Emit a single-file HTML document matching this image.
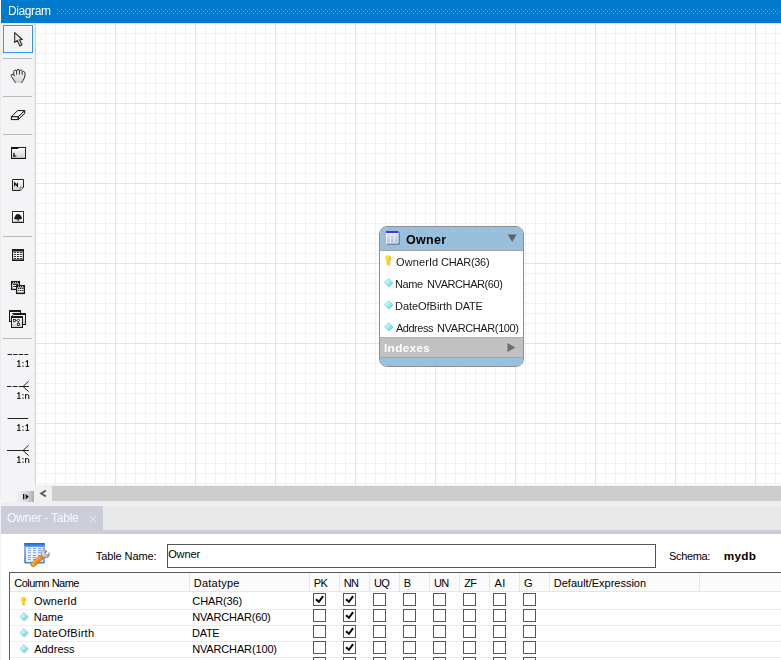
<!DOCTYPE html>
<html><head><meta charset="utf-8"><title>Diagram</title>
<style>
html,body{margin:0;padding:0;}
body{width:781px;height:660px;overflow:hidden;background:#fff;font-family:"Liberation Sans",sans-serif;font-size:11px;color:#000;position:relative;}
.a{position:absolute;}
.tx{position:absolute;white-space:pre;line-height:normal;}
#hdr{left:1px;top:0;width:780px;height:23px;background:#007acc;}
#tb{left:0;top:23px;width:35px;height:479px;background:#f4f4f6;border-radius:0 0 0 4px;}
#tbl{left:0;top:23px;width:1px;height:476px;background:#ececee;}
#tbsh{left:34px;top:23px;width:2px;height:462px;background:linear-gradient(90deg,#f1f1f2 0,#f1f1f2 50%,#d2d2d3 50%,#d2d2d3 100%);}
#cv{left:36px;top:23px;width:745px;height:462px;background-color:#fff;
background-image:
linear-gradient(90deg,#e3e3e3 1px,transparent 1px),
linear-gradient(0deg,transparent 79px,#e3e3e3 79px),
linear-gradient(90deg,#f1f1f1 1px,transparent 1px),
linear-gradient(180deg,#f1f1f1 1px,transparent 1px);
background-size:80px 80px,80px 80px,10px 10px,10px 10px;
background-position:79px 0,0 0,9px 0,0 10px;}
.sep{left:3px;width:29px;height:1px;background:#b9b9b9;}
#sel{left:3px;top:25px;width:28px;height:26px;border:1px solid #3393f3;box-shadow:inset 0 0 0 1px #fbfaf8;}
#sb{left:35px;top:485px;width:746px;height:17px;background:#f0f0f0;}
#thumb{left:52px;top:486px;width:729px;height:15px;background:#cdcdcd;}
#more{left:2px;top:491px;width:32px;height:11px;background:linear-gradient(90deg,rgba(168,168,170,0) 0,rgba(168,168,170,0) 40%,rgba(168,168,170,0.14) 60%,rgba(168,168,170,0.36) 78%,rgba(166,166,168,0.7) 92%,rgba(164,164,166,0.95) 100%);}
#gap{left:0;top:502px;width:781px;height:4px;background:#efeff1;}
#tabs{left:1px;top:506px;width:780px;height:24px;background:#e8e8e8;}
#tab{left:1px;top:506px;width:102px;height:28px;background:#cbced8;}
#band{left:1px;top:530px;width:780px;height:4px;background:#cbced8;}
#lm{left:0;top:506px;width:1px;height:154px;background:#f0f0f2;}
/* diagram table */
#dt{left:379px;top:226px;width:143px;height:139px;border:1px solid #8e8e8e;border-radius:8px;overflow:hidden;background:#fff;}
#dth{left:0;top:0;width:143px;height:23px;background:#98bfdb;border-bottom:1px solid #a3a3a3;}
#dti{left:0;top:110px;width:143px;height:21px;background:#c1c1c1;border-top:1px solid #b0b0b0;border-bottom:1px solid #a3a3a3;box-sizing:border-box;}
#dtf{left:0;top:131px;width:143px;height:8px;background:#98bfdb;}
/* bottom panel */
#inp{left:167px;top:544px;width:487px;height:22px;border:1px solid #555;background:#fff;}
#grid{left:9px;top:572px;width:772px;height:88px;border-left:1px solid #5a5a5a;border-top:1px solid #5a5a5a;background:#fff;}
#gh{left:10px;top:573px;width:771px;height:18px;background:#fbfbfb;border-bottom:1px solid #dfe7f3;}
.vs{top:573px;width:1px;height:18px;background:#dfe7f3;}
.hs{left:10px;width:771px;height:1px;background:#eeeeee;}
.cb{width:11px;height:11px;border:1px solid #585858;background:#fff;}

</style></head><body>
<div id="hdr" class="a"></div>
<div id="tb" class="a"></div><div id="tbl" class="a"></div>
<div id="tbsh" class="a"></div>
<div id="cv" class="a"></div><div id="crm" class="a" style="left:1px;top:23px;width:780px;height:1px;background:rgba(236,218,200,0.35)"></div>
<div class="a sep" style="top:58px"></div>
<div class="a sep" style="top:96px"></div>
<div class="a sep" style="top:134px"></div>
<div class="a sep" style="top:236px"></div>
<div class="a sep" style="top:338px"></div>
<div id="sel" class="a"></div>
<div id="sb" class="a"></div><div id="thumb" class="a"></div><div id="more" class="a"></div>
<div id="gap" class="a"></div><div id="tabs" class="a"></div><div id="band" class="a"></div><div id="tab" class="a"></div><div id="lm" class="a"></div>
<div id="dt" class="a"><div id="dth" class="a"></div><div id="dti" class="a"></div><div id="dtf" class="a"></div></div>
<div id="inp" class="a"></div>
<div id="grid" class="a"></div><div id="gh" class="a"></div>
<div class="a vs" style="left:189px"></div>
<div class="a vs" style="left:309px"></div>
<div class="a vs" style="left:339px"></div>
<div class="a vs" style="left:369px"></div>
<div class="a vs" style="left:399px"></div>
<div class="a vs" style="left:429px"></div>
<div class="a vs" style="left:459px"></div>
<div class="a vs" style="left:489px"></div>
<div class="a vs" style="left:519px"></div>
<div class="a vs" style="left:549px"></div>
<div class="a vs" style="left:699px"></div>
<div class="a hs" style="top:609px"></div>
<div class="a hs" style="top:625px"></div>
<div class="a hs" style="top:641px"></div>
<div class="a hs" style="top:657px"></div>
<div class="a cb" style="left:313px;top:593px"></div>
<div class="a cb" style="left:343px;top:593px"></div>
<div class="a cb" style="left:373px;top:593px"></div>
<div class="a cb" style="left:403px;top:593px"></div>
<div class="a cb" style="left:433px;top:593px"></div>
<div class="a cb" style="left:463px;top:593px"></div>
<div class="a cb" style="left:493px;top:593px"></div>
<div class="a cb" style="left:523px;top:593px"></div>
<div class="a cb" style="left:313px;top:609px"></div>
<div class="a cb" style="left:343px;top:609px"></div>
<div class="a cb" style="left:373px;top:609px"></div>
<div class="a cb" style="left:403px;top:609px"></div>
<div class="a cb" style="left:433px;top:609px"></div>
<div class="a cb" style="left:463px;top:609px"></div>
<div class="a cb" style="left:493px;top:609px"></div>
<div class="a cb" style="left:523px;top:609px"></div>
<div class="a cb" style="left:313px;top:625px"></div>
<div class="a cb" style="left:343px;top:625px"></div>
<div class="a cb" style="left:373px;top:625px"></div>
<div class="a cb" style="left:403px;top:625px"></div>
<div class="a cb" style="left:433px;top:625px"></div>
<div class="a cb" style="left:463px;top:625px"></div>
<div class="a cb" style="left:493px;top:625px"></div>
<div class="a cb" style="left:523px;top:625px"></div>
<div class="a cb" style="left:313px;top:641px"></div>
<div class="a cb" style="left:343px;top:641px"></div>
<div class="a cb" style="left:373px;top:641px"></div>
<div class="a cb" style="left:403px;top:641px"></div>
<div class="a cb" style="left:433px;top:641px"></div>
<div class="a cb" style="left:463px;top:641px"></div>
<div class="a cb" style="left:493px;top:641px"></div>
<div class="a cb" style="left:523px;top:641px"></div>
<div class="a cb" style="left:313px;top:657px"></div>
<div class="a cb" style="left:343px;top:657px"></div>
<div class="a cb" style="left:373px;top:657px"></div>
<div class="a cb" style="left:403px;top:657px"></div>
<div class="a cb" style="left:433px;top:657px"></div>
<div class="a cb" style="left:463px;top:657px"></div>
<div class="a cb" style="left:493px;top:657px"></div>
<div class="a cb" style="left:523px;top:657px"></div>
<svg class="a" style="left:0;top:0" width="781" height="660" viewBox="0 0 781 660">
<defs>
<pattern id="dots" x="57" y="9" width="4" height="4" patternUnits="userSpaceOnUse"><rect x="0" y="0" width="1" height="1" fill="#62a8e2"/><rect x="2" y="2" width="1" height="1" fill="#62a8e2"/></pattern>
<linearGradient id="gw" x1="0" y1="0" x2="0" y2="1"><stop offset="0" stop-color="#ffffff"/><stop offset="1" stop-color="#cfcfcf"/></linearGradient>
<linearGradient id="gw2" x1="0" y1="0" x2="1" y2="1"><stop offset="0" stop-color="#ffffff"/><stop offset="1" stop-color="#c8c8c8"/></linearGradient>
<linearGradient id="gdia" x1="0" y1="0" x2="1" y2="1"><stop offset="0.1" stop-color="#e6ffff"/><stop offset="0.55" stop-color="#8df1f6"/><stop offset="0.95" stop-color="#4ddfea"/></linearGradient>
<linearGradient id="gkey" x1="0" y1="0" x2="1" y2="0"><stop offset="0" stop-color="#fbe35a"/><stop offset="0.5" stop-color="#f8d21c"/><stop offset="1" stop-color="#e9bd10"/></linearGradient>
<linearGradient id="gtbl" x1="0" y1="0" x2="0" y2="1"><stop offset="0" stop-color="#e3e9f8"/><stop offset="1" stop-color="#a9bfe6"/></linearGradient>
<linearGradient id="gband" x1="0" y1="0" x2="0" y2="1"><stop offset="0" stop-color="#1c62d8"/><stop offset="1" stop-color="#4c95f2"/></linearGradient>
<linearGradient id="gbody" x1="0" y1="0" x2="0" y2="1"><stop offset="0" stop-color="#7fb0f0"/><stop offset="1" stop-color="#3f7fe0"/></linearGradient>
<linearGradient id="gin" x1="0" y1="0" x2="1" y2="1"><stop offset="0" stop-color="#ffffff"/><stop offset="1" stop-color="#d4e4fb"/></linearGradient>
<linearGradient id="gor" x1="0" y1="0" x2="1" y2="1"><stop offset="0" stop-color="#fbb04a"/><stop offset="0.5" stop-color="#f28c1e"/><stop offset="1" stop-color="#d9700f"/></linearGradient>
<linearGradient id="gsil" x1="0" y1="0" x2="1" y2="1"><stop offset="0" stop-color="#f2f2f2"/><stop offset="0.5" stop-color="#cfcfcf"/><stop offset="1" stop-color="#8e8e8e"/></linearGradient>
<g id="dia"><path d="M0.6,0.9 L5,5.3 L0.6,5.3 Z" fill="none"/><path d="M0,-4.1 L4.1,0 L0,4.1 L-4.1,0 Z" transform="translate(0.7,0.8)" fill="#8f989d" opacity="0.5"/><path d="M0,-4.1 L4.1,0 L0,4.1 L-4.1,0 Z" fill="url(#gdia)" stroke="#7cc3cb" stroke-width="0.6"/></g>
<g id="key"><path d="M0.8,0.8 m-3,0 a3,3 0 1 1 6,0 q0,1.6 -1.3,2.3 l0,3.6 l-0.9,0.9 l-1.6,0 l-0.9,-0.9 l0,-3.6 q-1.3,-0.7 -1.3,-2.3z" fill="#a9b4c8" opacity="0.45"/><path d="M-3,0 a3,3 0 1 1 6,0 q0,1.6 -1.3,2.3 l0,3.6 l-0.9,0.9 l-1.6,0 l-0.9,-0.9 l0,-3.6 q-1.3,-0.7 -1.3,-2.3z" fill="url(#gkey)"/><circle cx="0" cy="-1.2" r="0.8" fill="#fdf0a0"/></g>
<g id="one"><path d="M0.6,1.8 L2.2,0.7 L2.2,6.2" fill="none" stroke="#0a0a0a" stroke-width="1.05"/><path d="M0.4,6.5 L3.9,6.5" fill="none" stroke="#0a0a0a" stroke-width="0.9"/></g>
<g id="col"><rect x="0" y="2.1" width="1.15" height="1.2" fill="#151515"/><rect x="0" y="5.6" width="1.15" height="1.2" fill="#151515"/></g>
<g id="en"><path d="M0.7,7 L0.7,2 M0.7,3.6 Q1.5,2.5 2.6,2.5 Q3.9,2.6 3.9,4.1 L3.9,7" fill="none" stroke="#0a0a0a" stroke-width="1"/></g>
<g id="chk"><path d="M2.9,6.3 L5.9,8.8 L10.1,3.1" fill="none" stroke="#0c0c0c" stroke-width="2.1"/></g>
</defs>
<!-- header dots -->
<rect x="57" y="9" width="723" height="5" fill="url(#dots)"/>

<!-- cursor -->
<path d="M14.7,32.7 L14.7,42.4 L17.2,40.4 L19.9,45.9 L22,44.8 L19.5,39.7 L22.3,39.5 Z" fill="url(#gw2)" stroke="#2a2a2a" stroke-width="1.1" stroke-linejoin="round"/>

<!-- hand -->
<path d="M15.6,82.9 L11.4,76.4 Q10.6,74.9 12,74.3 Q13.1,74 13.7,75 L13.8,71.6 Q14,70.1 15.2,70.1 Q16.5,70.1 16.6,71.4 Q16.7,69.3 18,69.3 Q19.4,69.3 19.4,70.8 Q19.6,69.9 20.8,69.9 Q22.2,70 22.2,71.6 Q22.6,71.2 23.6,71.3 Q25,71.6 25,73.6 L25,75 Q24.8,78 23,80.6 L21.4,82.9 Z" fill="url(#gw)"/>
<path d="M15.4,82.5 L11.4,76.4 Q10.6,74.9 12,74.3 Q13.3,73.9 14.6,75.8 M13.8,75 L13.8,71.6 Q14,70.1 15.2,70.1 Q16.5,70.1 16.6,71.4 L16.6,74.3 M16.6,71.2 Q16.7,69.3 18,69.3 Q19.4,69.3 19.4,70.8 L19.4,74.2 M19.4,71 Q19.6,69.9 20.8,69.9 Q22.2,70 22.2,71.6 L22.2,74.4 M22.2,72 Q22.6,71.2 23.6,71.3 Q25,71.6 25,73.6 L25,75 Q24.8,78 23,80.6 L21.6,82.5" fill="none" stroke="#2e2e2e" stroke-width="1" stroke-linecap="round"/>

<!-- eraser -->
<path d="M11.4,116.8 L17.6,110.6 L24.8,110.6 L18.1,116.8 Z" fill="#f6f6f6" stroke="#111" stroke-width="1" stroke-linejoin="round"/>
<path d="M18.1,116.8 L24.8,110.6 L24.8,113.4 L18.1,119.6 Z" fill="#e8e8e8" stroke="#111" stroke-width="1" stroke-linejoin="round"/>
<rect x="11.4" y="116.8" width="6.7" height="2.8" fill="#fff" stroke="#111" stroke-width="1"/>

<!-- layer -->
<rect x="11.5" y="147.5" width="14" height="11" fill="url(#gw)" stroke="#1e1e1e" stroke-width="1"/>
<path d="M11,147 L19,147 L18,149 L11,149 Z" fill="#111"/>
<path d="M12.5,150 L18.5,150 L19.5,148.5 L24.5,148.5" fill="none" stroke="#fff" stroke-width="0.8" opacity="0.9"/>
<rect x="13.3" y="152.9" width="1.3" height="3.7" fill="#151515"/><rect x="13.3" y="155.5" width="3" height="1.1" fill="#151515"/><path d="M12,158.4 L25,158.4" stroke="#111" stroke-width="0.9"/>

<!-- note -->
<path d="M12.5,179.5 L23.5,179.5 L23.5,187.3 L20.3,190.5 L12.5,190.5 Z" fill="url(#gw)" stroke="#222" stroke-width="1"/>
<path d="M20.3,190.3 L20.3,187.3 L23.4,187.3" fill="#fff" stroke="#555" stroke-width="0.8"/>
<path d="M14.6,186.2 L14.6,182.8 L17.4,186.2 L17.4,182.8" fill="none" stroke="#151515" stroke-width="1.15" stroke-linejoin="miter"/>

<!-- image -->
<rect x="12.5" y="211.5" width="11" height="11" fill="#fff" stroke="#2e2e2e" stroke-width="1"/><path d="M12,222.5 L24,222.5" stroke="#222" stroke-width="0.8"/>
<path d="M14.3,218.9 Q13.9,217.3 15.1,216.2 Q15.7,214.1 17.5,214 Q20.2,213.9 20.9,215.8 Q22.2,217.1 21.9,218.8 Q20.4,219.8 18.6,219.4 L18.6,221.6 L17.6,221.6 L17.6,219.4 Q15.7,220 14.3,218.9 Z" fill="#1a1a1a"/>
<path d="M13.5,221.3 L22.5,221.3" stroke="#888" stroke-width="0.8"/>

<!-- table -->
<rect x="12.6" y="249.6" width="10.8" height="10.6" fill="#fff" stroke="#1a1a1a" stroke-width="1.2"/>
<rect x="12" y="249" width="12" height="2.5" fill="#1a1a1a"/>
<path d="M12,260.3 L24,260.3" stroke="#1a1a1a" stroke-width="1.4"/>
<g fill="#383838"><rect x="14" y="252" width="2.2" height="1"/><rect x="17" y="252" width="2.2" height="1"/><rect x="20" y="252" width="2.2" height="1"/><rect x="14" y="254" width="2.2" height="1"/><rect x="17" y="254" width="2.2" height="1"/><rect x="20" y="254" width="2.2" height="1"/><rect x="14" y="256" width="2.2" height="1"/><rect x="17" y="256" width="2.2" height="1"/><rect x="20" y="256" width="2.2" height="1"/><rect x="14" y="258" width="2.2" height="1"/><rect x="17" y="258" width="2.2" height="1"/><rect x="20" y="258" width="2.2" height="1"/></g>

<!-- views (two tables) -->
<g><rect x="11.6" y="281.6" width="7.8" height="7.8" fill="#fff" stroke="#1a1a1a" stroke-width="1.3"/><rect x="11" y="281" width="9" height="2.4" fill="#1a1a1a"/>
<g fill="#333"><rect x="13" y="284" width="5" height="1"/><rect x="13" y="286" width="5" height="1"/></g>
<g fill="#ddd"><rect x="13" y="281.9" width="1" height="0.9"/><rect x="15" y="281.9" width="1" height="0.9"/><rect x="17" y="281.9" width="1" height="0.9"/></g></g>
<g><rect x="16.6" y="285.6" width="7.8" height="7.8" fill="#fff" stroke="#1a1a1a" stroke-width="1.3"/><rect x="16" y="285" width="9" height="2.4" fill="#1a1a1a"/><path d="M16,293.4 L25,293.4" stroke="#1a1a1a" stroke-width="1.3"/>
<g fill="#2a2a2a"><rect x="18" y="288" width="1.5" height="1"/><rect x="20" y="288" width="1.5" height="1"/><rect x="22" y="288" width="1.5" height="1"/><rect x="18" y="290" width="1.5" height="1"/><rect x="20" y="290" width="1.5" height="1"/><rect x="22" y="290" width="1.5" height="1"/></g>
<g fill="#ddd"><rect x="18" y="285.9" width="1" height="0.9"/><rect x="20" y="285.9" width="1" height="0.9"/><rect x="22" y="285.9" width="1" height="0.9"/></g></g>

<!-- routines (three windows) -->
<g><rect x="9.5" y="310.5" width="11" height="11" fill="url(#gw)" stroke="#1a1a1a"/><rect x="9" y="310" width="12" height="2" fill="#1a1a1a"/></g>
<g><rect x="12.5" y="313.5" width="13" height="11" fill="url(#gw)" stroke="#1a1a1a"/><rect x="12" y="313" width="14" height="2" fill="#1a1a1a"/><rect x="11.8" y="313.8" width="1.4" height="1.4" fill="#eee"/></g>
<g><rect x="11.5" y="316.5" width="11" height="11" fill="url(#gw)" stroke="#1a1a1a"/><rect x="11" y="316" width="12" height="2" fill="#1a1a1a"/>
<rect x="13.4" y="319.4" width="2" height="2" fill="#fff" stroke="#222" stroke-width="0.8"/><circle cx="18.4" cy="320.4" r="1.2" fill="#fff" stroke="#222" stroke-width="0.8"/><rect x="17.4" y="323.4" width="2" height="2" fill="#fff" stroke="#222" stroke-width="0.8"/>
<path d="M15.6,320.4 L17,320.4 M18.4,321.8 L18.4,323.2" stroke="#222" stroke-width="0.8"/></g>

<!-- relationships -->
<g stroke="#222" stroke-width="1" fill="none">
<path d="M7.6,354.5 L28.2,354.5" stroke-dasharray="4.4 1.2"/>
<path d="M7,386.5 L23,386.5" stroke-dasharray="4.6 1.2"/><path d="M28.6,381.3 L23,386.5 L28.6,391.5 M23,386.5 L29,386.5"/>
<path d="M7.6,418.5 L28.2,418.5"/>
<path d="M7,450.5 L29,450.5"/><path d="M28.6,445.3 L23,450.5 L28.6,455.5"/>
</g>

<use href="#one" x="16.8" y="360"/><use href="#col" x="22.4" y="360"/><use href="#one" x="25.2" y="360"/>
<use href="#one" x="16.8" y="392"/><use href="#col" x="22.4" y="392"/><use href="#en" x="24.9" y="392"/>
<use href="#one" x="16.8" y="424"/><use href="#col" x="22.4" y="424"/><use href="#one" x="25.2" y="424"/>
<use href="#one" x="16.8" y="456"/><use href="#col" x="22.4" y="456"/><use href="#en" x="24.9" y="456"/>
<!-- big table + wrench icon -->
<g>
<rect x="24.2" y="543" width="20.6" height="20.4" rx="0.8" fill="url(#gbody)"/>
<rect x="24.2" y="543" width="20.6" height="3.6" rx="0.6" fill="url(#gband)"/>
<rect x="25.9" y="547.2" width="17.4" height="14.8" fill="url(#gin)"/>
<g fill="#6f9dea"><rect x="27.8" y="548.2" width="3.1" height="0.9"/><rect x="32.9" y="548.2" width="3.1" height="0.9"/><rect x="38" y="548.2" width="3.6" height="0.9"/><rect x="27.8" y="550.2" width="3.1" height="0.9"/><rect x="32.9" y="550.2" width="3.1" height="0.9"/><rect x="38" y="550.2" width="3.6" height="0.9"/><rect x="27.8" y="552.3" width="3.1" height="0.9"/><rect x="32.9" y="552.3" width="3.1" height="0.9"/><rect x="38" y="552.3" width="3.6" height="0.9"/><rect x="27.8" y="555.1" width="3.1" height="0.9"/><rect x="32.9" y="555.1" width="3.1" height="0.9"/><rect x="38" y="555.1" width="3.6" height="0.9"/><rect x="27.8" y="557.1" width="3.1" height="0.9"/><rect x="32.9" y="557.1" width="3.1" height="0.9"/><rect x="38" y="557.1" width="3.6" height="0.9"/><rect x="27.8" y="559" width="3.1" height="0.9"/><rect x="32.9" y="559" width="3.1" height="0.9"/><rect x="38" y="559" width="3.6" height="0.9"/></g>
<circle cx="45.4" cy="554" r="4" fill="url(#gsil)" stroke="#7c7c7c" stroke-width="0.7"/>
<path d="M45.6,553.4 L50.6,548.4" stroke="#ffffff" stroke-width="3.3" fill="none"/>
<path d="M44.9,552.6 L46.6,551" stroke="#47588a" stroke-width="1.6" fill="none" opacity="0.85"/>
<path d="M44.3,552 Q44.6,554.3 46.8,554.6" stroke="#8d97ad" stroke-width="0.7" fill="none"/>
<path d="M33.1,564.4 L40.4,558.1" stroke="#c9650d" stroke-width="5.2" stroke-linecap="round" fill="none"/>
<path d="M33.1,564.4 L40.4,558.1" stroke="url(#gor)" stroke-width="4.2" stroke-linecap="round" fill="none"/>
<path d="M32.8,563.2 L39.6,557.5" stroke="#fcc472" stroke-width="1" stroke-linecap="round" fill="none" opacity="0.8"/>
<circle cx="33.3" cy="564.5" r="0.8" fill="#fbd9a0"/>
</g>
<!-- more button glyph -->
<rect x="23" y="494" width="1.3" height="5.4" fill="#111"/><path d="M25.6,494 L25.6,499.5 L28.8,496.75 Z" fill="#111"/>
<!-- scroll arrow -->
<path d="M46,490.6 L41.2,493.5 L46,496.4" fill="none" stroke="#5a5a5a" stroke-width="1.8"/>
<!-- tab close -->
<path d="M89.6,516 L96,522.2 M96,516 L89.6,522.2" stroke="#eceef3" stroke-width="1" fill="none"/>

<!-- diagram table: header icon -->
<rect x="387.2" y="232.2" width="12.6" height="12.6" rx="0.6" fill="#3f4c78" opacity="0.62"/>
<rect x="386" y="231" width="12.5" height="12.5" fill="#fff"/>
<rect x="386.8" y="233" width="10.9" height="9.7" fill="url(#gtbl)"/>
<rect x="386" y="231" width="12.5" height="2" fill="#3a3ae0"/>
<path d="M390.3,233 L390.3,242.7 M394.3,233 L394.3,242.7" stroke="#f0f4fd" stroke-width="1"/>
<!-- triangles -->
<path d="M507.8,234.4 L516.6,234.4 L512.2,242 Z" fill="#606060"/>
<path d="M507.4,343 L507.4,352 L515.4,347.5 Z" fill="#6e6e6e"/>
<!-- key + diamonds in diagram -->
<use href="#key" x="388.05" y="258.2"/>
<use href="#dia" x="388.6" y="282.5"/>
<use href="#dia" x="388.6" y="304.6"/>
<use href="#dia" x="388.6" y="326.6"/>
<!-- key + diamonds in grid -->
<use href="#key" x="23.2" y="599.4" transform="translate(23.2 599.4) scale(0.86) translate(-23.2 -599.4)"/>
<use href="#dia" x="23.8" y="616.5"/>
<use href="#dia" x="23.8" y="632.5"/>
<use href="#dia" x="23.8" y="648.5"/>
<!-- checkmarks -->
<use href="#chk" x="313" y="593"/>
<use href="#chk" x="343" y="593"/>
<use href="#chk" x="343" y="609"/>
<use href="#chk" x="343" y="625"/>
<use href="#chk" x="343" y="641"/>
</svg>

<div class="tx" style="will-change:transform;left:7.90px;top:4.14px;font-size:12.00px;font-weight:normal;color:#ffffff;letter-spacing:-0.399px">Diagram</div>
<div class="tx" style="will-change:transform;left:7.45px;top:511.14px;font-size:12.00px;font-weight:normal;color:rgba(255,255,255,0.88);letter-spacing:-0.224px">Owner - Table</div>
<div class="tx" style="will-change:transform;left:406.00px;top:232.69px;font-size:12.50px;font-weight:bold;color:#000000;letter-spacing:0.275px">Owner</div>
<div class="tx" style="will-change:transform;left:395.58px;top:256.05px;font-size:11.00px;font-weight:normal;color:#1a1a1a;letter-spacing:0.108px">OwnerId</div>
<div class="tx" style="will-change:transform;left:440.65px;top:256.05px;font-size:11.00px;font-weight:normal;color:#1a1a1a;letter-spacing:-0.310px">CHAR(36)</div>
<div class="tx" style="will-change:transform;left:395.10px;top:278.05px;font-size:11.00px;font-weight:normal;color:#1a1a1a;letter-spacing:-0.420px">Name</div>
<div class="tx" style="will-change:transform;left:426.70px;top:278.05px;font-size:11.00px;font-weight:normal;color:#1a1a1a;letter-spacing:-0.415px">NVARCHAR(60)</div>
<div class="tx" style="will-change:transform;left:395.10px;top:300.05px;font-size:11.00px;font-weight:normal;color:#1a1a1a;letter-spacing:-0.042px">DateOfBirth</div>
<div class="tx" style="will-change:transform;left:454.90px;top:300.05px;font-size:11.00px;font-weight:normal;color:#1a1a1a;letter-spacing:-0.267px">DATE</div>
<div class="tx" style="will-change:transform;left:395.91px;top:322.05px;font-size:11.00px;font-weight:normal;color:#1a1a1a;letter-spacing:-0.487px">Address</div>
<div class="tx" style="will-change:transform;left:436.70px;top:322.05px;font-size:11.00px;font-weight:normal;color:#1a1a1a;letter-spacing:-0.382px">NVARCHAR(100)</div>
<div class="tx" style="will-change:transform;left:384.35px;top:341.32px;font-size:11.80px;font-weight:bold;color:#ffffff;letter-spacing:0.328px">Indexes</div>
<div class="tx" style="left:95.86px;top:550.04px;font-size:11.00px;font-weight:normal;color:#000000;letter-spacing:-0.105px">Table Name:</div>
<div class="tx" style="left:168.17px;top:548.04px;font-size:11.00px;font-weight:normal;color:#000000;letter-spacing:-0.120px">Owner</div>
<div class="tx" style="left:669.09px;top:550.04px;font-size:11.00px;font-weight:normal;color:#000000;letter-spacing:-0.371px">Schema:</div>
<div class="tx" style="left:723.74px;top:549.32px;font-size:11.80px;font-weight:bold;color:#000000;letter-spacing:0.224px">mydb</div>
<div class="tx" style="left:14.26px;top:577.04px;font-size:11.00px;font-weight:normal;color:#000000;letter-spacing:-0.509px">Column Name</div>
<div class="tx" style="left:193.80px;top:577.04px;font-size:11.00px;font-weight:normal;color:#000000;letter-spacing:0.236px">Datatype</div>
<div class="tx" style="left:313.80px;top:577.04px;font-size:11.00px;font-weight:normal;color:#000000;letter-spacing:-0.750px">PK</div>
<div class="tx" style="left:343.80px;top:577.04px;font-size:11.00px;font-weight:normal;color:#000000;letter-spacing:-0.619px">NN</div>
<div class="tx" style="left:373.98px;top:577.04px;font-size:11.00px;font-weight:normal;color:#000000;letter-spacing:-0.750px">UQ</div>
<div class="tx" style="left:403.80px;top:577.04px;font-size:11.00px;font-weight:normal;color:#000000;letter-spacing:0.000px">B</div>
<div class="tx" style="left:433.98px;top:577.04px;font-size:11.00px;font-weight:normal;color:#000000;letter-spacing:-0.750px">UN</div>
<div class="tx" style="left:464.37px;top:577.04px;font-size:11.00px;font-weight:normal;color:#000000;letter-spacing:-0.750px">ZF</div>
<div class="tx" style="left:494.62px;top:577.04px;font-size:11.00px;font-weight:normal;color:#000000;letter-spacing:0.300px">AI</div>
<div class="tx" style="left:524.11px;top:577.04px;font-size:11.00px;font-weight:normal;color:#000000;letter-spacing:0.000px">G</div>
<div class="tx" style="left:553.80px;top:577.04px;font-size:11.00px;font-weight:normal;color:#000000;letter-spacing:-0.003px">Default/Expression</div>
<div class="tx" style="left:34.04px;top:595.04px;font-size:11.00px;font-weight:normal;color:#000000;letter-spacing:0.154px">OwnerId</div>
<div class="tx" style="left:33.80px;top:611.04px;font-size:11.00px;font-weight:normal;color:#000000;letter-spacing:-0.005px">Name</div>
<div class="tx" style="left:33.80px;top:627.04px;font-size:11.00px;font-weight:normal;color:#000000;letter-spacing:0.281px">DateOfBirth</div>
<div class="tx" style="left:34.19px;top:643.04px;font-size:11.00px;font-weight:normal;color:#000000;letter-spacing:-0.009px">Address</div>
<div class="tx" style="left:192.34px;top:595.04px;font-size:11.00px;font-weight:normal;color:#000000;letter-spacing:-0.141px">CHAR(36)</div>
<div class="tx" style="left:192.13px;top:611.04px;font-size:11.00px;font-weight:normal;color:#000000;letter-spacing:-0.169px">NVARCHAR(60)</div>
<div class="tx" style="left:192.11px;top:627.04px;font-size:11.00px;font-weight:normal;color:#000000;letter-spacing:-0.349px">DATE</div>
<div class="tx" style="left:192.13px;top:643.04px;font-size:11.00px;font-weight:normal;color:#000000;letter-spacing:-0.142px">NVARCHAR(100)</div>
</body></html>
